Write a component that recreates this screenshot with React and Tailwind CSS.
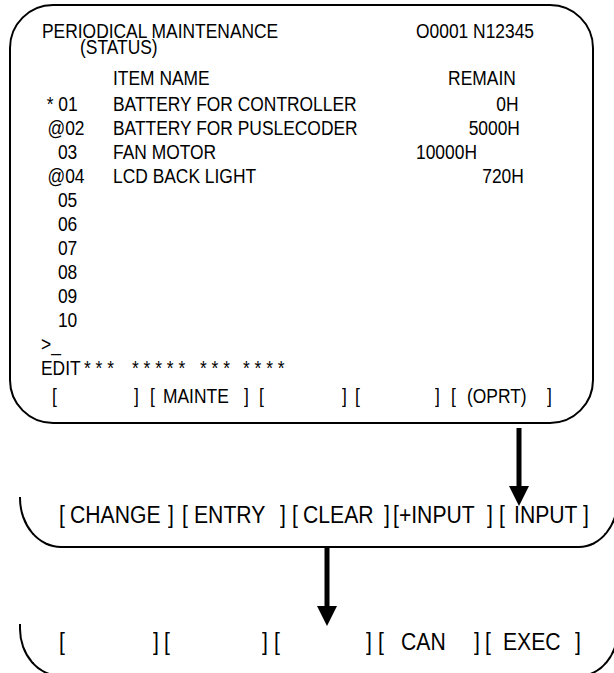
const FONT = "font-['Liberation_Sans',Arial,sans-serif]";

// narrow text: Arial Narrow is not installed, so squeeze Liberation Sans
function N({ children, right }) {
  return (
    <span className={`inline-block whitespace-pre scale-x-[0.87] ${right ? "origin-right" : "origin-left"}`}>
      {children}
    </span>
  );
}

function W({ children }) {
  return <span className="inline-block origin-left scale-x-[0.92] whitespace-pre">{children}</span>;
}

function Arrow({ className }) {
  return (
    <svg className={className} width="20" height="78" viewBox="0 0 20 78">
      <rect x="7.5" y="0" width="5" height="60" fill="#000" />
      <polygon points="0,58 20,58 10,78" fill="#000" />
    </svg>
  );
}

const rows = [
  { no: "* 01", name: "BATTERY FOR CONTROLLER", value: "0H", cls: "w-[106px] text-right" },
  { no: "@02", name: "BATTERY FOR PUSLECODER", value: "5000H", cls: "w-[107px] text-right" },
  { no: "03", name: "FAN MOTOR", value: "10000H", cls: "w-[107px] pl-[3px]" },
  { no: "@04", name: "LCD BACK LIGHT", value: "720H", cls: "w-[111px] text-right" },
  { no: "05" },
  { no: "06" },
  { no: "07" },
  { no: "08" },
  { no: "09" },
  { no: "10" },
];

function Key({ w, children }) {
  return <span className={`shrink-0 ${w}`}>{children}</span>;
}

export default function App() {
  return (
    <div className={`w-[614px] h-[673px] overflow-hidden bg-white text-black ${FONT}`}>
      {/* main screen */}
      <div className="ml-[9px] mt-[4px] flex h-[420px] w-[585px] flex-col rounded-[44px] border-2 border-black pl-[31px] pt-[13px] text-[20px] leading-[24px]">
        <div className="flex">
          <span className="w-[374px] shrink-0"><N>PERIODICAL MAINTENANCE</N></span>
          <N>O0001 N12345</N>
        </div>
        <div className="-mt-[8px] pl-[38px]"><N>(STATUS)</N></div>
        <div className="mt-[7px] flex">
          <span className="w-[35px] shrink-0" />
          <span className="ml-[36px] w-[300px] shrink-0"><N>ITEM NAME</N></span>
          <span className="w-[103px] shrink-0 text-right"><N right>REMAIN</N></span>
        </div>
        <div className="mt-[2px]">
          {rows.map((r) => (
            <div key={r.no} className="flex h-[24px]">
              <span className="w-[35px] shrink-0 text-right"><N right>{r.no}</N></span>
              <span className="ml-[36px] w-[300px] shrink-0"><N>{r.name}</N></span>
              {r.value && (
                <span className={`shrink-0 ${r.cls}`}>
                  <N right={!r.cls.includes("pl-")}>{r.value}</N>
                </span>
              )}
            </div>
          ))}
        </div>
        <div className="h-[24px] -ml-[1px]"><N>&gt;_</N></div>
        <div className="flex h-[24px] -ml-[1px]">
          <span className="w-[43px] shrink-0"><N>EDIT</N></span>
          <span className="w-[48px] shrink-0"><N>* * *</N></span>
          <span className="w-[68px] shrink-0"><N>* * * * *</N></span>
          <span className="w-[43px] shrink-0"><N>* * *</N></span>
          <N>* * * *</N>
        </div>
        <div className="mt-[4px] flex pl-[10px]">
          <Key w="w-[82px]"><N>[</N></Key>
          <Key w="w-[16px]"><N>]</N></Key>
          <Key w="w-[13px]"><N>[</N></Key>
          <Key w="w-[81px]"><N>MAINTE</N></Key>
          <Key w="w-[15px]"><N>]</N></Key>
          <Key w="w-[83px]"><N>[</N></Key>
          <Key w="w-[13px]"><N>]</N></Key>
          <Key w="w-[80px]"><N>[</N></Key>
          <Key w="w-[16px]"><N>]</N></Key>
          <Key w="w-[16px]"><N>[</N></Key>
          <Key w="w-[80px]"><N>(OPRT)</N></Key>
          <N>]</N>
        </div>
      </div>

      <Arrow className="ml-[509px] mt-[4px] block" />

      {/* soft key level 2 */}
      <div className="-mt-[9px] ml-[19px] h-[51px] w-[600px] rounded-bl-[42px_50px] rounded-br-[40px_50px] border-x-2 border-b-2 border-black pl-[38px] pt-[7px] text-[23px] leading-[23px]">
        <div className="flex">
          <Key w="w-[11px]"><W>[</W></Key>
          <Key w="w-[98px]"><W>CHANGE</W></Key>
          <Key w="w-[14px]"><W>]</W></Key>
          <Key w="w-[12px]"><W>[</W></Key>
          <Key w="w-[86px]"><W>ENTRY</W></Key>
          <Key w="w-[12px]"><W>]</W></Key>
          <Key w="w-[11px]"><W>[</W></Key>
          <Key w="w-[81px]"><W>CLEAR</W></Key>
          <Key w="w-[9px]"><W>]</W></Key>
          <Key w="w-[94px]"><W>[+INPUT</W></Key>
          <Key w="w-[12px]"><W>]</W></Key>
          <Key w="w-[15px]"><W>[</W></Key>
          <Key w="w-[69px]"><W>INPUT</W></Key>
          <W>]</W>
        </div>
      </div>

      <Arrow className="ml-[317px] block" />

      {/* soft key level 3 */}
      <div className="-mt-[2px] ml-[19px] h-[53px] w-[600px] rounded-bl-[42px_48px] rounded-br-[40px_48px] border-x-2 border-b-2 border-black pl-[38px] pt-[7px] text-[23px] leading-[23px]">
        <div className="flex">
          <Key w="w-[94px]"><W>[</W></Key>
          <Key w="w-[11px]"><W>]</W></Key>
          <Key w="w-[98px]"><W>[</W></Key>
          <Key w="w-[12px]"><W>]</W></Key>
          <Key w="w-[92px]"><W>[</W></Key>
          <Key w="w-[12px]"><W>]</W></Key>
          <Key w="w-[23px]"><W>[</W></Key>
          <Key w="w-[73px]"><W>CAN</W></Key>
          <Key w="w-[11px]"><W>]</W></Key>
          <Key w="w-[18px]"><W>[</W></Key>
          <Key w="w-[72px]"><W>EXEC</W></Key>
          <W>]</W>
        </div>
      </div>
    </div>
  );
}
